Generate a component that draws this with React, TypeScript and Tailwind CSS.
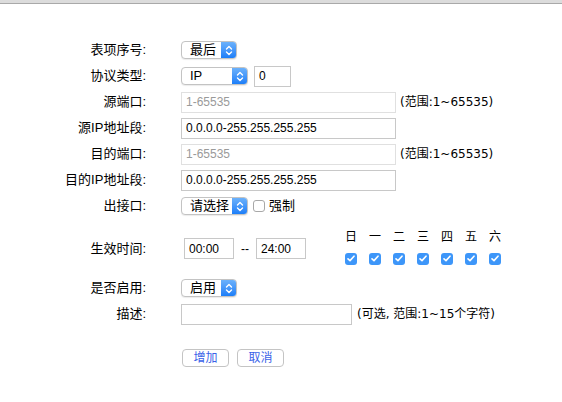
import React from 'react';

const cjk = '"Liberation Sans", "Noto Sans CJK SC", sans-serif';
const hint = '"DejaVu Sans", "Noto Sans CJK SC", sans-serif';

function Chevrons() {
  return (
    <svg width="8" height="11" viewBox="0 0 8 11" fill="none" stroke="white" strokeWidth="1.4" strokeLinecap="round" strokeLinejoin="round">
      <path d="M1.5 4 L4 1.5 L6.5 4" />
      <path d="M1.5 7 L4 9.5 L6.5 7" />
    </svg>
  );
}

function Select({ label, width }: { label: string; width: string }) {
  return (
    <div className={`flex h-[18px] ${width} overflow-hidden rounded-[4px] border border-[#c3c3c3] bg-white shadow-[0_1px_1px_rgba(0,0,0,0.08)]`}>
      <span className="flex-1 pl-[8px] text-[13px] leading-[16px] text-black">{label}</span>
      <span className="flex w-[15px] items-center justify-center bg-gradient-to-b from-[#6bb1fb] to-[#1a7ef8]">
        <Chevrons />
      </span>
    </div>
  );
}

function TextBox({ value, placeholder, width, light }: { value?: string; placeholder?: string; width: string; light?: boolean }) {
  return (
    <div className={`flex h-[21px] ${width} items-center border ${light ? 'border-[#e0e0e0]' : 'border-[#c8c8c8]'} bg-white pl-[4px] text-[12px]`}>
      {value ? <span className="text-black">{value}</span> : <span className="text-[#9a9a9a]">{placeholder}</span>}
    </div>
  );
}

function Row({ label, children, height = 'h-[26px]' }: { label: string; children: React.ReactNode; height?: string }) {
  return (
    <div className={`flex ${height} items-center`}>
      <div className="w-[146px] text-right text-[13px] text-black">{label}</div>
      <div className="flex items-center pl-[35px]">{children}</div>
    </div>
  );
}

function Check() {
  return (
    <span className="flex h-[12px] w-[12px] items-center justify-center rounded-[3px] bg-[#3d96f9]">
      <svg width="8" height="7" viewBox="0 0 8 7" fill="none" stroke="white" strokeWidth="1.6" strokeLinecap="round" strokeLinejoin="round">
        <path d="M1 3.8 L3 5.6 L7 1.2" />
      </svg>
    </span>
  );
}

const days = ['日', '一', '二', '三', '四', '五', '六'];

export default function App() {
  return (
    <div className="relative h-[402px] w-[562px] overflow-hidden bg-white" style={{ fontFamily: cjk }}>
      <div className="h-[4px] border-b border-[#a9a9a9] bg-[#dcdcdc]" />
      <div className="pt-[33px]">
        <Row label="表项序号:">
          <Select label="最后" width="w-[56px]" />
        </Row>
        <Row label="协议类型:">
          <Select label="IP" width="w-[67px]" />
          <div className="ml-[6px]">
            <TextBox value="0" width="w-[37px]" />
          </div>
        </Row>
        <Row label="源端口:">
          <TextBox placeholder="1-65535" width="w-[215px]" light />
          <span className="ml-[4px] text-[12px] text-black" style={{ fontFamily: hint }}>(范围:1~65535)</span>
        </Row>
        <Row label="源IP地址段:">
          <TextBox value="0.0.0.0-255.255.255.255" width="w-[215px]" />
        </Row>
        <Row label="目的端口:">
          <TextBox placeholder="1-65535" width="w-[215px]" light />
          <span className="ml-[4px] text-[12px] text-black" style={{ fontFamily: hint }}>(范围:1~65535)</span>
        </Row>
        <Row label="目的IP地址段:">
          <TextBox value="0.0.0.0-255.255.255.255" width="w-[215px]" />
        </Row>
        <Row label="出接口:">
          <Select label="请选择" width="w-[67px]" />
          <span className="ml-[5px] h-[12px] w-[12px] rounded-[3px] border border-[#a8a8a8] bg-white" />
          <span className="ml-[4px] text-[13px] text-black">强制</span>
        </Row>
        <Row label="生效时间:" height="h-[56px] pt-[3px]">
          <div className="pl-[3px]">
            <TextBox value="00:00" width="w-[50px]" />
          </div>
          <span className="mx-[7px] text-[12px] text-black">--</span>
          <TextBox value="24:00" width="w-[50px]" />
          <div className="ml-[33px] -mt-[4px] grid w-[168px] grid-cols-7 gap-y-[8px]">
            {days.map((d) => (
              <span key={d} className="text-center text-[12px] leading-[16px] text-black">{d}</span>
            ))}
            {days.map((d) => (
              <span key={d + 'c'} className="flex justify-center">
                <Check />
              </span>
            ))}
          </div>
        </Row>
        <Row label="是否启用:">
          <Select label="启用" width="w-[56px]" />
        </Row>
        <Row label="描述:">
          <TextBox width="w-[171px]" />
          <span className="ml-[5px] text-[12px] text-black" style={{ fontFamily: hint }}>(可选, 范围:1~15个字符)</span>
        </Row>
        <div className="mt-[22px] flex gap-[8px] pl-[182px]">
          <button className="h-[18px] w-[47px] rounded-[4px] border border-[#c4c4c4] bg-white text-[12px] leading-[16px] text-[#3a62e8]">增加</button>
          <button className="h-[18px] w-[47px] rounded-[4px] border border-[#c4c4c4] bg-white text-[12px] leading-[16px] text-[#3a62e8]">取消</button>
        </div>
      </div>
    </div>
  );
}
